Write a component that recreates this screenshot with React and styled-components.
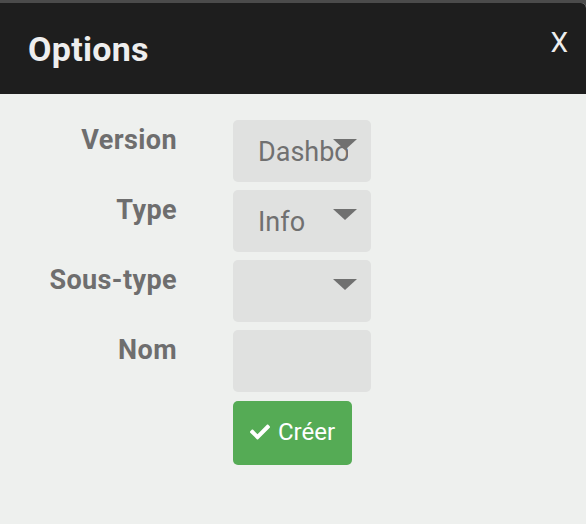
import React from 'react';
import styled, { createGlobalStyle } from 'styled-components';
import { FaCheck } from 'react-icons/fa';

const GlobalStyle = createGlobalStyle`
  html, body {
    margin: 0;
    padding: 0;
    background: #4b4b4b;
    font-family: Roboto, "Liberation Sans", Arial, sans-serif;
  }
`;

const fields = [
  { label: 'Version', kind: 'select', value: 'Dashboard' },
  { label: 'Type', kind: 'select', value: 'Info' },
  { label: 'Sous-type', kind: 'select', value: '' },
  { label: 'Nom', kind: 'input', value: '' },
];

const Arrow = () => (
  <svg width="24" height="11" viewBox="0 0 24 11">
    <polygon points="0,0 24,0 12,11" fill="#707070" />
  </svg>
);

const App = () => {
  return (
    <>
      <GlobalStyle />
      <Page>
        <Modal>
          <Header>
            <Title>Options</Title>
            <Close>X</Close>
          </Header>
          <Body>
            <Form>
              {fields.map((f) => (
                <React.Fragment key={f.label}>
                  <Label>{f.label}</Label>
                  <Field>
                    {f.kind === 'select' && (
                      <>
                        <FieldText>{f.value}</FieldText>
                        <ArrowSlot><Arrow /></ArrowSlot>
                      </>
                    )}
                  </Field>
                </React.Fragment>
              ))}
              <span />
              <CreateButton>
                <FaCheck size={20} />
                Créer
              </CreateButton>
            </Form>
          </Body>
        </Modal>
      </Page>
    </>
  );
};

export default App;

const Page = styled.div`
  width: 586px;
  height: 524px;
  padding-top: 3px;
  box-sizing: border-box;
  display: flex;
  flex-direction: column;
`;

const Modal = styled.div`
  flex: 1;
  display: flex;
  flex-direction: column;
  background: #eef0ee;
  border-top-right-radius: 5px;
  overflow: hidden;
`;

const Header = styled.div`
  height: 91px;
  background: #1e1e1e;
  display: flex;
  align-items: center;
  justify-content: space-between;
  padding: 0 18px 0 28px;
  box-sizing: border-box;
`;

const Title = styled.h1`
  margin: 0;
  font-size: 34px;
  letter-spacing: 0.3px;
  font-weight: 700;
  color: #eeeeee;
`;

const Close = styled.span`
  font-size: 28px;
  color: #eeeeee;
  align-self: flex-start;
  margin-top: 23px;
`;

const Body = styled.div`
  flex: 1;
  padding: 26px 0 0 40px;
`;

const Form = styled.div`
  display: grid;
  grid-template-columns: 137px 138px;
  column-gap: 56px;
  row-gap: 8px;
`;

const Label = styled.div`
  text-align: right;
  font-size: 27px;
  letter-spacing: 0.4px;
  font-weight: 700;
  color: #6e6e6e;
  padding-top: 4px;
`;

const Field = styled.div`
  position: relative;
  height: 62px;
  background: #e0e1e0;
  border-radius: 5px;
  display: flex;
  align-items: center;
  padding: 0 23px 0 25px;
  box-sizing: border-box;
`;

const FieldText = styled.span`
  font-size: 27px;
  color: #707070;
  white-space: nowrap;
  overflow: hidden;
  flex: 1;
  padding-top: 2px;
`;

const ArrowSlot = styled.span`
  position: absolute;
  right: 14px;
  top: 19px;
  display: flex;
`;

const CreateButton = styled.button`
  width: 119px;
  height: 64px;
  margin-top: 1px;
  background: #55ab55;
  border: none;
  border-radius: 5px;
  color: #ffffff;
  font-family: Roboto, "Liberation Sans", Arial, sans-serif;
  font-size: 24px;
  display: flex;
  align-items: center;
  justify-content: center;
  gap: 8px;
  padding: 0 0 2px 0;
`;
